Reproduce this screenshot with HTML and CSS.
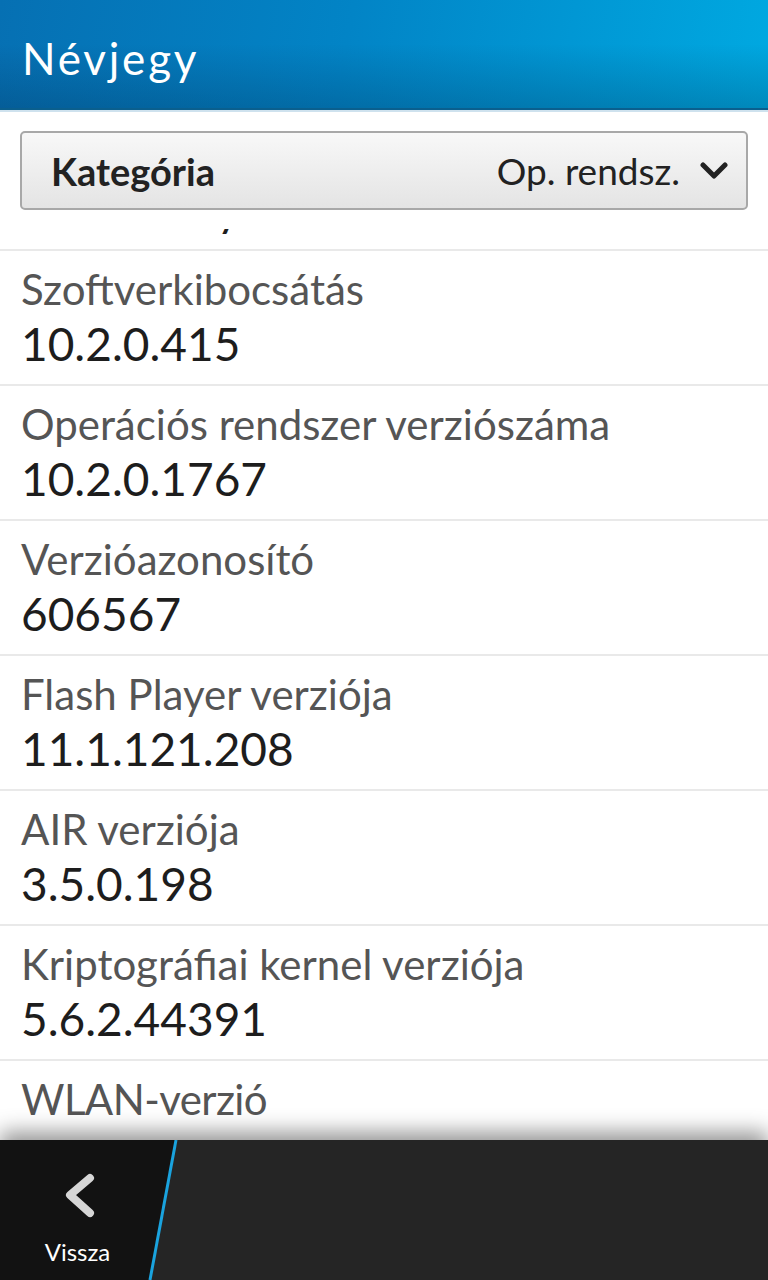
FILE: index.html
```html
<!DOCTYPE html>
<html lang="hu">
<head>
<meta charset="utf-8">
<title>Névjegy</title>
<link rel="stylesheet" href="styles.css">
</head>
<body>
<div class="screen">
  <header class="titlebar">
    <h1 class="title">Névjegy</h1>
  </header>
  <main class="viewport">
    <div class="picker-panel">
      <div class="picker">
        <span class="picker-label">Kategória</span>
        <span class="picker-value">Op. rendsz.</span>
        <svg class="picker-chevron" width="28" height="18" viewBox="0 0 28 18"><path d="M3 3 L14 14 L25 3" fill="none" stroke="#222" stroke-width="5" stroke-linecap="round" stroke-linejoin="round"/></svg>
      </div>
    </div>
    <ul class="list">
      <li class="row"><div class="label">Platform</div><div class="value">BlackBerry</div></li>
      <li class="row"><div class="label">Szoftverkibocsátás</div><div class="value">10.2.0.415</div></li>
      <li class="row"><div class="label">Operációs rendszer verziószáma</div><div class="value">10.2.0.1767</div></li>
      <li class="row"><div class="label">Verzióazonosító</div><div class="value">606567</div></li>
      <li class="row"><div class="label">Flash Player verziója</div><div class="value">11.1.121.208</div></li>
      <li class="row"><div class="label">AIR verziója</div><div class="value">3.5.0.198</div></li>
      <li class="row"><div class="label">Kriptográfiai kernel verziója</div><div class="value">5.6.2.44391</div></li>
      <li class="row"><div class="label label-tight">WLAN-verzió</div></li>
    </ul>
  </main>
  <footer class="actionbar">
    <svg class="divider" width="768" height="140" viewBox="0 0 768 140">
      <polygon points="0,0 177,0 151,140 0,140" fill="#121212"/>
      <line x1="176" y1="0" x2="150" y2="140" stroke="#1aa3de" stroke-width="3"/>
    </svg>
    <div class="back">
      <svg class="back-icon" width="34" height="46" viewBox="0 0 34 46"><path d="M27 5 L7 22 L27 40" fill="none" stroke="#d6d6d6" stroke-width="8" stroke-linecap="round" stroke-linejoin="round"/></svg>
      <span class="back-label">Vissza</span>
    </div>
  </footer>
</div>
</body>
</html>
```
FILE: styles.css
```css
* { box-sizing: border-box; }
html, body { margin: 0; padding: 0; }
body {
  width: 768px;
  height: 1280px;
  overflow: hidden;
  font-family: Lato, "Open Sans", "DejaVu Sans", sans-serif;
  background: #fff;
}
.screen {
  width: 768px;
  height: 1280px;
  display: flex;
  flex-direction: column;
}
.titlebar {
  height: 112px;
  flex: none;
  background:
    linear-gradient(180deg, rgba(0,0,0,0) 0%, rgba(0,0,0,0) 40%, rgba(0,20,50,0.22) 100%),
    linear-gradient(100deg, #0670b3 0%, #0284c6 45%, #00a9e1 100%);
  border-bottom: 2px solid #cfe2ee;
  box-shadow: inset 0 -2px 0 #0a5f8e;
  display: flex;
  align-items: center;
  padding: 8px 0 2px 22px;
}
.title {
  margin: 0;
  color: #fff;
  font-weight: 400;
  font-size: 44px;
  line-height: 52px;
  letter-spacing: 2.8px;
}
.viewport {
  flex: 1;
  position: relative;
  overflow: hidden;
}
.picker-panel {
  position: absolute;
  left: 0;
  top: 0;
  width: 768px;
  height: 117px;
  background: #fff;
  z-index: 2;
  padding: 19px 20px 0 20px;
}
.picker {
  height: 79px;
  border: 2px solid #a8a8a8;
  border-radius: 5px;
  background: linear-gradient(180deg, #f8f8f8 0%, #ececec 60%, #e4e4e4 100%);
  display: flex;
  align-items: center;
  padding: 0 18px 0 29px;
  color: #222;
}
.picker-label {
  font-weight: 700;
  font-size: 38px;
  flex: 1;
}
.picker-value {
  font-size: 37px;
  margin-right: 20px;
}
.picker-chevron { display: block; }
.list {
  list-style: none;
  margin: 0;
  padding: 4px 0 0 0;
}
.row {
  height: 135px;
  border-bottom: 2px solid #e9e9e9;
  padding: 14px 21px 0 21px;
}
.label {
  font-size: 42px;
  color: #555;
  line-height: 48px;
}
.label-tight { letter-spacing: -0.6px; }
.value {
  font-size: 46px;
  color: #1d1d1d;
  line-height: 62px;
}
.actionbar {
  height: 140px;
  flex: none;
  position: relative;
  background: #252525;
  box-shadow: 0 -8px 20px rgba(0,0,0,0.42);
  z-index: 3;
}
.divider {
  position: absolute;
  left: 0;
  top: 0;
}
.back {
  position: relative;
  width: 155px;
  height: 140px;
  display: flex;
  flex-direction: column;
  align-items: center;
  padding-top: 33px;
}
.back-icon { display: block; margin-left: 4px; }
.back-label {
  margin-top: 18px;
  color: #fff;
  font-size: 24px;
}
```
